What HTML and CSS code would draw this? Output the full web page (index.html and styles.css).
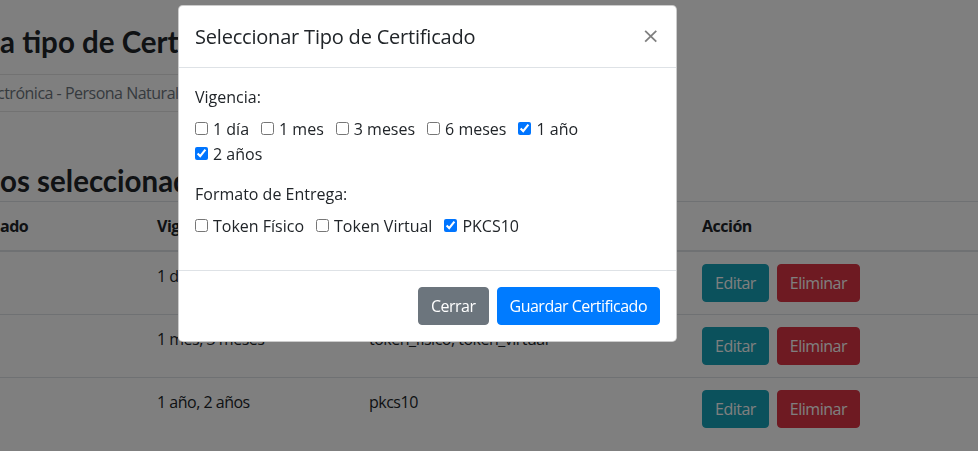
FILE: index.html
```html
<!DOCTYPE html>
<html lang="es">
<head>
<meta charset="utf-8">
<title>Certificados</title>
<link rel="stylesheet" href="styles.css">
</head>
<body>
<main class="page">
  <h2 class="page-title">a tipo de Certificado</h2>
  <hr class="rule">
  <p class="subtitle">ctrónica - Persona Natural</p>
  <hr class="rule">
  <h2 class="section-title">os seleccionados</h2>
  <table class="table">
    <thead>
      <tr>
        <th class="col-type">ado</th>
        <th class="col-vig">Vigencia</th>
        <th class="col-fmt">Formato de Entrega</th>
        <th>Acción</th>
      </tr>
    </thead>
    <tbody>
      <tr>
        <td class="col-type"></td>
        <td>1 día, 1 mes</td>
        <td>token_fisico</td>
        <td><div class="actions"><button class="btn btn-info">Editar</button><button class="btn btn-danger">Eliminar</button></div></td>
      </tr>
      <tr>
        <td class="col-type"></td>
        <td>1 mes, 3 meses</td>
        <td>token_fisico, token_virtual</td>
        <td><div class="actions"><button class="btn btn-info">Editar</button><button class="btn btn-danger">Eliminar</button></div></td>
      </tr>
      <tr>
        <td class="col-type"></td>
        <td>1 año, 2 años</td>
        <td>pkcs10</td>
        <td><div class="actions"><button class="btn btn-info">Editar</button><button class="btn btn-danger">Eliminar</button></div></td>
      </tr>
    </tbody>
  </table>
</main>

<div class="backdrop"></div>

<div class="modal">
  <div class="modal-content">
    <div class="modal-header">
      <h5 class="modal-title">Seleccionar Tipo de Certificado</h5>
      <button class="close" type="button" aria-label="Close">×</button>
    </div>
    <div class="modal-body">
      <div class="form-group">
        <div class="group-label">Vigencia:</div>
        <div class="check-list">
          <label class="form-check"><input type="checkbox">1 día</label>
          <label class="form-check"><input type="checkbox">1 mes</label>
          <label class="form-check"><input type="checkbox">3 meses</label>
          <label class="form-check"><input type="checkbox">6 meses</label>
          <label class="form-check"><input type="checkbox" checked>1 año</label>
          <label class="form-check"><input type="checkbox" checked>2 años</label>
        </div>
      </div>
      <div class="form-group">
        <div class="group-label">Formato de Entrega:</div>
        <div class="check-list">
          <label class="form-check"><input type="checkbox">Token Físico</label>
          <label class="form-check"><input type="checkbox">Token Virtual</label>
          <label class="form-check"><input type="checkbox" checked>PKCS10</label>
        </div>
      </div>
    </div>
    <div class="modal-footer">
      <button class="btn btn-secondary">Cerrar</button>
      <button class="btn btn-primary">Guardar Certificado</button>
    </div>
  </div>
</div>
</body>
</html>
```

FILE: styles.css
```css
* { box-sizing: border-box; }

html, body {
  margin: 0;
  padding: 0;
  width: 978px;
  height: 451px;
  overflow: hidden;
  background: #fff;
}

body {
  font-family: "Segoe UI", "Open Sans", "Noto Sans", sans-serif;
  font-size: 16px;
  line-height: 1.5;
  color: #212529;
}

.page {
  padding-top: 22px;
  letter-spacing: -0.5px;
}

.page-title,
.section-title {
  margin: 0;
  font-family: "Lato", "Open Sans", sans-serif;
  font-size: 29.5px;
  font-weight: 700;
  line-height: 40px;
  letter-spacing: 0;
}

.page-title { margin-bottom: 12px; }

.rule {
  margin: 0;
  border: 0;
  border-top: 1px solid rgba(0, 0, 0, 0.1);
  width: 178px;
}

.subtitle {
  margin: 0;
  padding: 6px 0 6px;
  margin-left: -3px;
  color: #6c757d;
}

.section-title {
  margin-top: 49px;
  margin-bottom: 0;
}

.table {
  width: 978px;
  border-collapse: collapse;
}

.table th,
.table td {
  padding: 12px;
  text-align: left;
  vertical-align: top;
  border-top: 1px solid #dee2e6;
}

.table thead th {
  font-weight: 700;
  border-bottom: 2px solid #dee2e6;
}

.table .col-type { width: 145px; padding-left: 0; }
.table .col-vig { width: 212px; }
.table .col-fmt { width: 333px; }

.actions {
  display: flex;
  gap: 8px;
}

.btn {
  font-family: inherit;
  font-size: 16px;
  line-height: 24px;
  padding: 6px 12px;
  border: 1px solid transparent;
  border-radius: 4px;
  color: #fff;
  letter-spacing: -0.5px;
  cursor: pointer;
}

.btn-info { background: #17a2b8; border-color: #17a2b8; }
.btn-danger { background: #dc3545; border-color: #dc3545; }
.btn-secondary { background: #6c757d; border-color: #6c757d; }
.btn-primary { background: #007bff; border-color: #007bff; }

.backdrop {
  position: fixed;
  inset: 0;
  background: rgba(0, 0, 0, 0.5);
}

.modal {
  position: fixed;
  top: 5px;
  left: 178px;
  width: 499px;
}

.modal-content {
  display: flex;
  flex-direction: column;
  background: #fff;
  border: 1px solid rgba(0, 0, 0, 0.2);
  border-radius: 4.8px;
}

.modal-header {
  display: flex;
  align-items: flex-start;
  justify-content: space-between;
  padding: 16px 16px 15px;
  border-bottom: 1px solid #dee2e6;
}

.modal-title {
  margin: 0;
  font-size: 20px;
  font-weight: 500;
  line-height: 30px;
  letter-spacing: -0.2px;
}

.close {
  padding: 19px 16px 13px;
  margin: -16px -16px -16px auto;
  background: transparent;
  border: 0;
  font-family: "DejaVu Sans", sans-serif;
  font-size: 22px;
  font-weight: 400;
  line-height: 1;
  color: #000;
  opacity: 0.5;
  text-shadow: 0 1px 0 #fff;
  cursor: pointer;
}

.modal-body {
  padding: 17px 16px 16px;
}

.form-group {
  margin-bottom: 16px;
}

.group-label {
  margin-bottom: 7px;
}

.check-list {
  display: flex;
  flex-wrap: wrap;
}

.form-check {
  display: inline-flex;
  align-items: center;
  height: 25px;
  margin-right: 12px;
}

.form-check input {
  width: 13px;
  height: 13px;
  margin: 0 5px 0 0;
}

.modal-footer {
  display: flex;
  align-items: center;
  justify-content: flex-end;
  padding: 12px;
  border-top: 1px solid #dee2e6;
}

.modal-footer .btn {
  margin: 4px;
}
```
